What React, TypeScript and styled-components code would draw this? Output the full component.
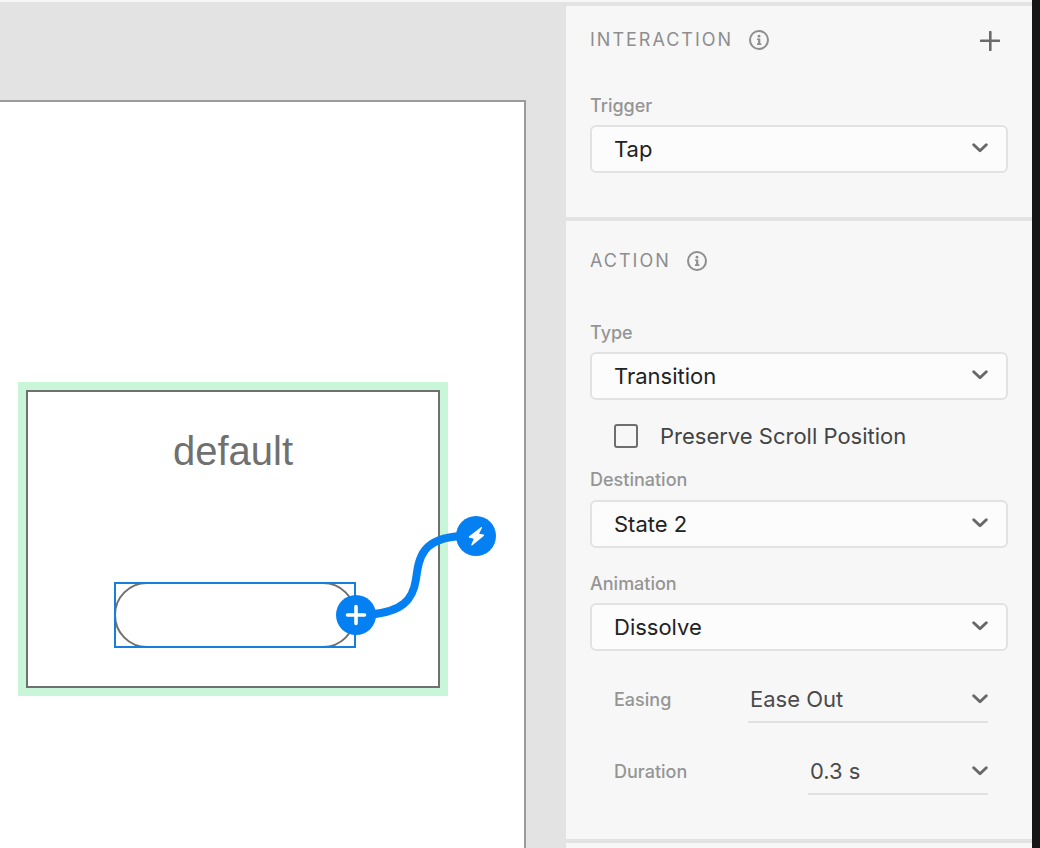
import React from "react";
import styled, { createGlobalStyle } from "styled-components";

const GlobalStyle = createGlobalStyle`
  *, *::before, *::after { box-sizing: border-box; }
  body {
    margin: 0;
    background: #f7f7f7;
    font-family: Inter, "Liberation Sans", sans-serif;
  }
`;

const Shell = styled.div`
  display: flex;
  flex-direction: column;
  min-height: 100vh;
  padding-top: 2px;
  background: #f7f7f7;
  border-right: 8px solid #161616;
`;

const Workspace = styled.div`
  flex: 1;
  display: grid;
  grid-template-columns: minmax(0, 1fr) minmax(320px, 466px);
  background: #e3e3e3;
`;

const Canvas = styled.main`
  display: flex;
  padding: 98px 40px 0 0;
  overflow: hidden;
`;

const Artboard = styled.div`
  position: relative;
  flex: 1;
  background: #fff;
  border-top: 2px solid #9b9b9b;
  border-right: 2px solid #9b9b9b;
`;

const StateFrame = styled.div`
  position: absolute;
  left: 18px;
  top: 280px;
  width: 430px;
  height: 314px;
  border: 8px solid #c9f5d9;
`;

const StateBody = styled.div`
  height: 100%;
  padding-top: 36px;
  border: 2px solid #707070;
`;

const StateTitle = styled.p`
  margin: 0;
  font-family: "Liberation Sans", Arial, sans-serif;
  font-size: 40px;
  line-height: 46px;
  text-align: center;
  color: #707070;
`;

const Selection = styled.div`
  position: absolute;
  left: 114px;
  top: 480px;
  width: 242px;
  height: 66px;

  &::after {
    content: "";
    position: absolute;
    inset: 0;
    border: 2px solid #157fdc;
  }
`;

const Pill = styled.div`
  height: 100%;
  border: 2px solid #707070;
  border-radius: 33px;
`;

const Wire = styled.svg`
  position: absolute;
  left: 336px;
  top: 414px;
`;

const Panel = styled.aside`
  display: flex;
  flex-direction: column;
  gap: 4px;
  padding-top: 4px;
`;

const Section = styled.section<{ $top: number }>`
  padding: ${(p) => p.$top}px 24px 44px;
  background: #f7f7f7;
`;

const PanelRest = styled.div`
  flex: 1;
  min-height: 5px;
  background: #f7f7f7;
`;

const SectionHeader = styled.header<{ $gap: number }>`
  display: flex;
  align-items: center;
  gap: 16px;
  height: 24px;
  margin-bottom: ${(p) => p.$gap}px;
`;

const SectionTitle = styled.h2`
  margin: 0;
  font-size: 18px;
  font-weight: 400;
  line-height: 24px;
  letter-spacing: 2px;
  color: #8e8e8e;
`;

const IconButton = styled.button`
  display: flex;
  padding: 0;
  border: 0;
  background: none;
  color: #8e8e8e;
`;

const AddButton = styled(IconButton)`
  margin: 2px 8px 0 auto;
  color: #6a6a6a;
`;

const Field = styled.div`
  display: grid;
  gap: 7px;
`;

const Label = styled.label`
  font-size: 18px;
  font-weight: 500;
  line-height: 24px;
  color: #959595;
`;

const SelectWrap = styled.div<{ $inset: number }>`
  display: grid;
  align-items: center;

  > * { grid-area: 1 / 1; }

  > svg {
    justify-self: end;
    margin-right: ${(p) => p.$inset}px;
    margin-bottom: 2px;
    pointer-events: none;
  }
`;

const BaseSelect = styled.select`
  appearance: none;
  width: 100%;
  margin: 0;
  font-family: inherit;
  font-size: 22px;
  outline: none;
`;

const BoxSelect = styled(BaseSelect)`
  height: 48px;
  padding: 0 44px 0 22px;
  border: 2px solid #e2e2e2;
  border-radius: 6px;
  background: #fcfcfc;
  color: #222;
`;

const LineSelect = styled(BaseSelect)`
  height: 46px;
  padding: 0 24px 0 2px;
  border: 0;
  border-bottom: 2px solid #e1e1e1;
  border-radius: 0;
  background: transparent;
  color: #4b4b4b;
`;

const CheckRow = styled.label`
  display: flex;
  align-items: center;
  gap: 22px;
  height: 24px;
  margin: 24px 0 20px 24px;
  font-size: 22px;
  color: #444;
  white-space: nowrap;
`;

const Checkbox = styled.input`
  appearance: none;
  flex: none;
  width: 24px;
  height: 24px;
  margin: 0;
  border: 2px solid #6e6e6e;
  border-radius: 3px;

  &:checked { background: #6e6e6e; }
`;

const TallField = styled.div`
  display: grid;
  padding-bottom: 24px;

  > div { gap: 8px; }
`;

const TimingList = styled.div`
  display: grid;
  gap: 26px;
  padding: 26px 20px 0 24px;
`;

const TimingRow = styled.div<{ $control: number }>`
  display: grid;
  grid-template-columns: 1fr ${(p) => p.$control}px;
  align-items: center;
`;

const Chevron = () => (
  <svg width="16" height="10" viewBox="0 0 16 10" fill="none" aria-hidden="true">
    <path d="M1.7 1.7 8 7.8l6.3-6.1" stroke="#686868" strokeWidth="2.9" strokeLinecap="round" strokeLinejoin="round" />
  </svg>
);

const InfoIcon = () => (
  <svg width="20" height="20" viewBox="0 0 20 20" fill="none" aria-hidden="true">
    <circle cx="10" cy="10" r="9" stroke="currentColor" strokeWidth="2" />
    <circle cx="10" cy="6.2" r="1.4" fill="currentColor" />
    <path d="M8 8.5h3.3v4.8h1v1.6H8v-1.6h1.1v-3.2H8z" fill="currentColor" />
  </svg>
);

const PlusIcon = () => (
  <svg width="20" height="20" viewBox="0 0 20 20" fill="none" aria-hidden="true">
    <path d="M10.3 1v18M1 9.7h18" stroke="currentColor" strokeWidth="2.6" strokeLinecap="round" />
  </svg>
);

const InteractionWire = () => (
  <Wire width="160" height="120" viewBox="0 0 160 120" fill="none" aria-hidden="true">
    <path d="M34 98.500C66 96 77 84 80 63C83 42 85 22 126 20" stroke="#0580f2" strokeWidth="8" />
    <circle cx="20" cy="99" r="20" fill="#0580f2" />
    <path d="M20 90.500v17M11.500 99h17" stroke="#fff" strokeWidth="3.6" strokeLinecap="round" />
    <circle cx="140" cy="20" r="20" fill="#0580f2" />
    <path
      d="M144.900 11.200 133.200 20.200c-.7.6-.5 1.300.3 1.500l4.300 1-2.500 5.800c-.3 1 .4 1.200 1.100.7l11.300-9.100c.7-.6.5-1.300-.3-1.500l-4.300-.8 2.800-5.900c.4-.9-.3-1.300-1-.7z"
      fill="#fff"
    />
  </Wire>
);

type SelectProps = { id: string; options: string[] };

const toOptions = (options: string[]) => options.map((o) => <option key={o}>{o}</option>);

const BoxField = ({ id, label, options }: SelectProps & { label: string }) => (
  <Field>
    <Label htmlFor={id}>{label}</Label>
    <SelectWrap $inset={20}>
      <BoxSelect id={id}>{toOptions(options)}</BoxSelect>
      <Chevron />
    </SelectWrap>
  </Field>
);

const TimingField = ({ id, label, options, width }: SelectProps & { label: string; width: number }) => (
  <TimingRow $control={width}>
    <Label htmlFor={id}>{label}</Label>
    <SelectWrap $inset={0}>
      <LineSelect id={id}>{toOptions(options)}</LineSelect>
      <Chevron />
    </SelectWrap>
  </TimingRow>
);

export default function App() {
  return (
    <>
      <GlobalStyle />
      <Shell>
        <Workspace>
          <Canvas>
            <Artboard>
              <StateFrame>
                <StateBody>
                  <StateTitle>default</StateTitle>
                </StateBody>
              </StateFrame>
              <Selection>
                <Pill />
              </Selection>
              <InteractionWire />
            </Artboard>
          </Canvas>
          <Panel>
            <Section $top={22}>
              <SectionHeader $gap={42}>
                <SectionTitle>INTERACTION</SectionTitle>
                <IconButton type="button" aria-label="About interactions">
                  <InfoIcon />
                </IconButton>
                <AddButton type="button" aria-label="Add interaction">
                  <PlusIcon />
                </AddButton>
              </SectionHeader>
              <BoxField id="trigger" label="Trigger" options={["Tap"]} />
            </Section>
            <Section $top={28}>
              <SectionHeader $gap={48}>
                <SectionTitle>ACTION</SectionTitle>
                <IconButton type="button" aria-label="About actions">
                  <InfoIcon />
                </IconButton>
              </SectionHeader>
              <BoxField id="type" label="Type" options={["Transition"]} />
              <CheckRow>
                <Checkbox type="checkbox" />
                Preserve Scroll Position
              </CheckRow>
              <TallField>
                <BoxField id="destination" label="Destination" options={["State 2"]} />
              </TallField>
              <BoxField id="animation" label="Animation" options={["Dissolve"]} />
              <TimingList>
                <TimingField id="easing" label="Easing" options={["Ease Out"]} width={240} />
                <TimingField id="duration" label="Duration" options={["0.3 s"]} width={180} />
              </TimingList>
            </Section>
            <PanelRest />
          </Panel>
        </Workspace>
      </Shell>
    </>
  );
}
